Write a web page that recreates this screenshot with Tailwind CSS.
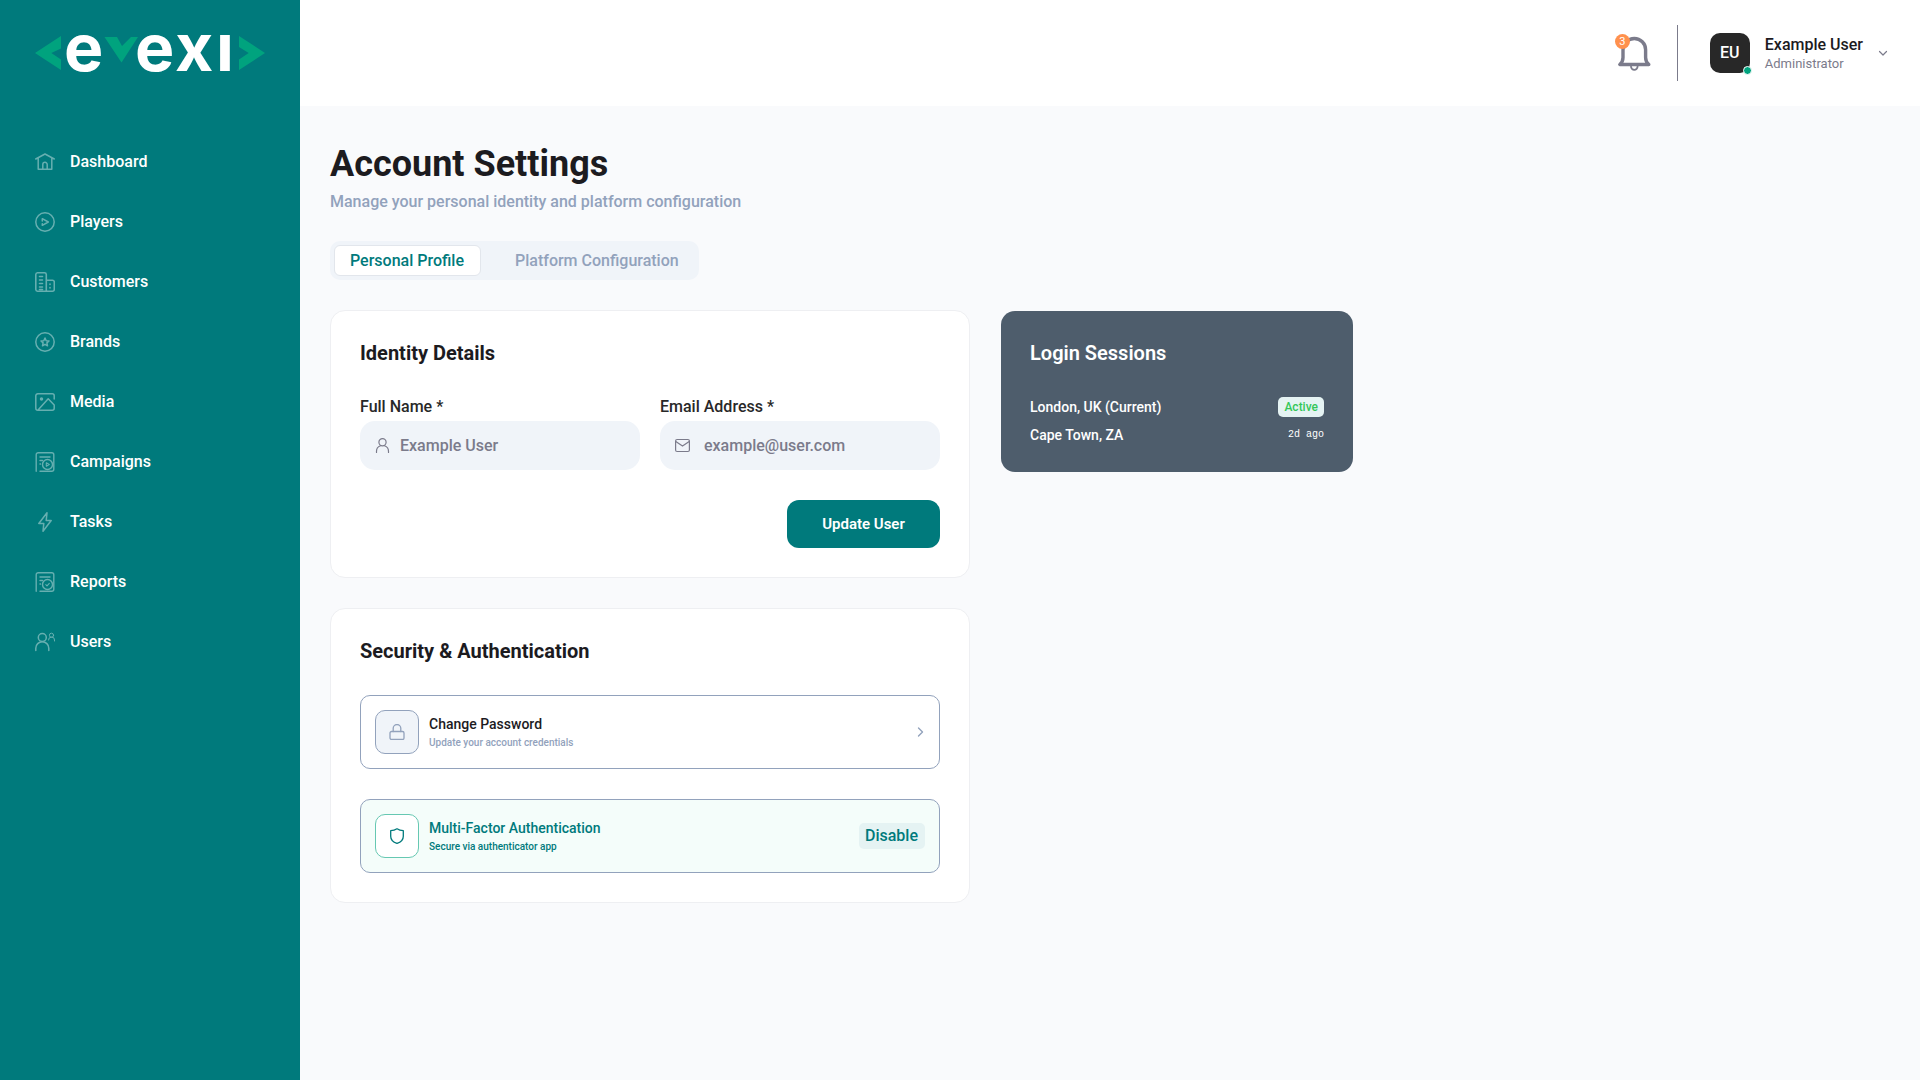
<!DOCTYPE html>
<html lang="en">
<head>
<meta charset="utf-8">
<meta name="viewport" content="width=device-width, initial-scale=1">
<title>Account Settings</title>
<script src="https://cdn.jsdelivr.net/npm/@tailwindcss/browser@4"></script>
</head>
<body class="flex min-h-screen bg-[#f9fafc] font-['Roboto',sans-serif] text-base font-medium text-[#1c1b1f]">

<aside class="w-[300px] shrink-0 bg-[#007a7c] px-[35px] text-white">
  <a href="#" aria-label="evexi" class="flex h-[106px] items-center">
    <svg class="w-[230px] shrink-0" height="106" viewBox="0 0 230 106" fill="none">
      <g fill="#00a37e">
        <path d="M26 36v12.500L16.300 53 26 59.500V70L0 53z"/>
        <path d="M69.500 37H82l5 9 9-9h7L86.500 62.500z"/>
        <path d="M204 36v11l9.700 6L204 59.500V70l26-17z"/>
      </g>
      <g fill="#fff" font-family="Inter" font-weight="700" font-size="66">
        <text x="29" y="71">e</text><text x="100" y="71">e</text><text x="140" y="71">x</text><text x="181" y="71">ı</text>
      </g>
    </svg>
  </a>
  <nav class="mt-[26px] flex flex-col">
    <a href="#" class="flex h-[60px] items-center gap-[15px]"><svg class="size-5 opacity-40" viewBox="0 0 20 20" fill="none" stroke="#fff" stroke-width="1.500" stroke-linecap="round" stroke-linejoin="round"><path d="M.7 7 10 2l9.300 5M3.200 6v11.300h13.600V6M7.800 17v-4.500a2.200 2.200 0 0 1 4.400 0V17"/></svg>Dashboard</a>
    <a href="#" class="flex h-[60px] items-center gap-[15px]"><svg class="size-5 opacity-40" viewBox="0 0 20 20" fill="none" stroke="#fff" stroke-width="1.500" stroke-linecap="round" stroke-linejoin="round"><circle cx="10" cy="10" r="9.200"/><path d="M7.300 9V6.700l6 3.300-6 3.300v-1.500"/></svg>Players</a>
    <a href="#" class="flex h-[60px] items-center gap-[15px]"><svg class="size-5 opacity-40" viewBox="0 0 20 20" fill="none" stroke="#fff" stroke-width="1.600" stroke-linecap="round" stroke-linejoin="round"><path d="M11.300 19.200H2.500A1.800 1.800 0 0 1 .8 17.500v-15A1.800 1.800 0 0 1 2.500.8h7a1.800 1.800 0 0 1 1.800 1.700zM11.300 8.300h6.200a1.800 1.800 0 0 1 1.800 1.700v7.500a1.800 1.800 0 0 1-1.800 1.700h-6.200M4.500 4.500h3M4.500 8h3M4.500 11.500h3M4.500 15h3M4.500 17.500h3M15 12v.5M15 15.500v.5"/></svg>Customers</a>
    <a href="#" class="flex h-[60px] items-center gap-[15px]"><svg class="size-5 opacity-40" viewBox="0 0 20 20" fill="none" stroke="#fff" stroke-width="1.500" stroke-linecap="round" stroke-linejoin="round"><circle cx="10" cy="10" r="9.200"/><path d="m10 6 1.200 2.700 2.800.3-2.100 1.900.6 2.900L10 12.300l-2.500 1.500.6-2.900L6 9l2.800-.3z"/></svg>Brands</a>
    <a href="#" class="flex h-[60px] items-center gap-[15px]"><svg class="size-5 opacity-40" viewBox="0 0 20 20" fill="none" stroke="#fff" stroke-width="1.500" stroke-linecap="round" stroke-linejoin="round"><path d="M19.200 7V3.800a2 2 0 0 0-2-2H2.800a2 2 0 0 0-2 2v12.400a2 2 0 0 0 2 2h14.400a2 2 0 0 0 2-2V13l-6-6.200L3.500 17.500"/><circle cx="6.500" cy="7" r="1" fill="#fff"/></svg>Media</a>
    <a href="#" class="flex h-[60px] items-center gap-[15px]"><svg class="size-5 opacity-40" viewBox="0 0 20 20" fill="none" stroke="#fff" stroke-width="1.400" stroke-linecap="round" stroke-linejoin="round"><path d="M1.200 19.300V2.700a2 2 0 0 1 2-2h13.600a2 2 0 0 1 2 2v14.600a2 2 0 0 1-2 2H5M5 5h10M5 8.500h2.500M5 12h.5"/><circle cx="12.500" cy="12.500" r="5"/><path d="m11.300 10.700 3 1.800-3 1.800z" stroke-width="1.100"/></svg>Campaigns</a>
    <a href="#" class="flex h-[60px] items-center gap-[15px]"><svg class="size-5 opacity-40" viewBox="0 0 20 20" fill="none" stroke="#fff" stroke-width="1.500" stroke-linecap="round" stroke-linejoin="round"><path d="M12 .8 3.800 11.500h5L8 19.200l8.200-10.700h-5z"/></svg>Tasks</a>
    <a href="#" class="flex h-[60px] items-center gap-[15px]"><svg class="size-5 opacity-40" viewBox="0 0 20 20" fill="none" stroke="#fff" stroke-width="1.400" stroke-linecap="round" stroke-linejoin="round"><path d="M1.200 19.300V2.700a2 2 0 0 1 2-2h13.600a2 2 0 0 1 2 2v14.600a2 2 0 0 1-2 2H5M5 5h10M5 8.500h2.500M5 12h.5"/><circle cx="12.500" cy="12.500" r="5"/><path d="m10.800 12.700 1.200 1.200 2.300-2.600" stroke-width="1.100"/></svg>Reports</a>
    <a href="#" class="flex h-[60px] items-center gap-[15px]"><svg class="size-5 opacity-40" viewBox="0 0 20 20" fill="none" stroke="#fff" stroke-width="1.500" stroke-linecap="round" stroke-linejoin="round"><circle cx="7.300" cy="5.500" r="4"/><path d="M.8 18.500v-2.300a6.500 6.500 0 0 1 13 0v2.300"/><g stroke-width="1"><circle cx="16.500" cy="3.300" r="2.100"/><path d="M13.500 8a3 3 0 0 1 6 0v1"/></g></svg>Users</a>
  </nav>
</aside>

<div class="min-w-0 grow">
  <header class="flex h-[106px] items-center justify-end bg-white pr-[29px]">
    <button type="button" aria-label="Notifications" class="relative mr-[26px] h-[38px] w-9">
      <svg class="absolute left-0 top-0 h-[38px] w-9" viewBox="0 0 36 38" fill="none" stroke="#7b7b8b" stroke-width="3.400" stroke-linejoin="round" stroke-linecap="round"><path d="M4.800 30.500h29c-2.700-2.300-3.200-4-3.200-7v-7.700a11.300 11.300 0 0 0-22.600 0v7.700c0 3-.5 4.700-3.200 7z"/><path d="M16 32.500a3.300 3.300 0 0 0 6.600 0" stroke-width="1.800"/></svg>
      <span class="absolute left-0 top-0 flex size-[15px] items-center justify-center rounded-full bg-[#ff914d] text-[11px] font-normal leading-none text-white">3</span>
    </button>
    <div class="h-14 w-px bg-[#7b7b8b]"></div>
    <button type="button" class="ml-8 flex items-center text-left">
      <span class="relative mr-[15px] flex size-10 items-center justify-center rounded-[10px] bg-[#282828] text-white">EU
        <span class="absolute -bottom-[2px] -right-[2px] size-[9px] rounded-full border border-white bg-[#00a37e]"></span>
      </span>
      <span class="flex flex-col pt-[2px]">
        <span class="leading-5">Example User</span>
        <span class="text-[13px] font-normal leading-[18px] text-[#7b7b8b]">Administrator</span>
      </span>
      <svg class="ml-3 size-4" viewBox="0 0 16 16" fill="none" stroke="#7b7b8b" stroke-width="1.200" stroke-linecap="round" stroke-linejoin="round"><path d="m4.500 6.500 3.500 3.500 3.500-3.500"/></svg>
    </button>
  </header>

  <main class="px-[30px] py-9">
    <h1 class="text-4xl font-bold leading-[44px]">Account Settings</h1>
    <p class="mt-1 leading-6 text-[#92a2bc]">Manage your personal identity and platform configuration</p>

    <div role="tablist" class="mt-[27px] flex h-[39px] w-fit items-center rounded-[10px] bg-[#f0f4f9] px-1">
      <button type="button" role="tab" aria-selected="true" class="h-[31px] rounded-md border border-[#e2e6ec] bg-white pl-[15px] pr-4 text-[#007a7c]">Personal Profile</button>
      <button type="button" role="tab" aria-selected="false" class="ml-[18px] h-[31px] px-4 text-[#92a2bc]">Platform Configuration</button>
    </div>

    <div class="mt-[30px] grid max-w-[1024px] grid-cols-[320fr_177fr] items-start gap-[30px]">
      <div class="flex flex-col gap-[30px]">
        <section class="rounded-[15px] border border-[#eeeff2] bg-white p-[29px]">
          <h2 class="text-xl font-bold leading-[27px]">Identity Details</h2>
          <form class="mt-[30px]">
            <div class="grid grid-cols-2 gap-5">
              <div>
                <label for="name" class="mb-1 block leading-5 text-[#282828]">Full Name *</label>
                <div class="flex h-[49px] items-center rounded-[15px] bg-[#f0f4f9] px-[15px] text-[#7b7b8b]">
                  <svg class="mr-[10px] size-[15px] shrink-0" viewBox="0 0 15 15" fill="none" stroke="currentColor" stroke-width="1.200" stroke-linecap="round"><circle cx="7.500" cy="4.200" r="3.600"/><path d="M1.500 14.400v-1.200c0-2.800 1.800-4.600 4-5.400M13.500 14.400v-1.200c0-2.800-1.800-4.600-4-5.400"/></svg>
                  <input id="name" type="text" value="Example User" class="w-full min-w-0 bg-transparent outline-none">
                </div>
              </div>
              <div>
                <label for="email" class="mb-1 block leading-5 text-[#282828]">Email Address *</label>
                <div class="flex h-[49px] items-center rounded-[15px] bg-[#f0f4f9] px-[15px] text-[#7b7b8b]">
                  <svg class="mr-[14px] size-[15px] shrink-0" viewBox="0 0 15 15" fill="none" stroke="currentColor" stroke-width="1.200" stroke-linecap="round" stroke-linejoin="round"><rect x=".6" y="1.500" width="13.800" height="12" rx="1.500"/><path d="m.8 3.500 6.700 4.600 6.700-4.600"/></svg>
                  <input id="email" type="email" value="example@user.com" class="w-full min-w-0 bg-transparent outline-none">
                </div>
              </div>
            </div>
            <button type="button" class="ml-auto mt-[30px] block h-12 w-[153px] rounded-xl bg-[#007a7c] text-[15px] font-semibold text-white">Update User</button>
          </form>
        </section>

        <section class="rounded-[15px] border border-[#eeeff2] bg-white p-[29px]">
          <h2 class="text-xl font-bold leading-[27px]">Security &amp; Authentication</h2>
          <div class="mt-[30px] flex flex-col gap-[30px]">
            <button type="button" class="flex h-[74px] items-center rounded-[10px] border border-[#92a2bc] px-[14px] text-left">
              <span class="mr-[10px] flex size-11 items-center justify-center rounded-[10px] border border-[#92a2bc] bg-[#f0f4f9]">
                <svg class="size-4" viewBox="0 0 16 16" fill="none" stroke="#92a2bc" stroke-width="1.300" stroke-linecap="round" stroke-linejoin="round"><rect x="1" y="7.500" width="14" height="8" rx="1.500"/><path d="M4.200 7.500V4.300a3.800 3.800 0 0 1 7.600 0v3.200"/></svg>
              </span>
              <span class="flex flex-col">
                <span class="text-sm leading-5">Change Password</span>
                <span class="text-[10px] leading-[17px] text-[#92a2bc]">Update your account credentials</span>
              </span>
              <svg class="ml-auto size-3" viewBox="0 0 12 12" fill="none" stroke="#92a2bc" stroke-width="1.400" stroke-linecap="round" stroke-linejoin="round"><path d="m5.500 2 4 4-4 4"/></svg>
            </button>
            <div class="flex h-[74px] items-center rounded-[10px] border border-[#92a2bc] bg-[#f4fdfa] px-[14px] text-[#007a7c]">
              <span class="mr-[10px] flex size-11 items-center justify-center rounded-[10px] border border-[#66c8b2] bg-white">
                <svg class="size-4" viewBox="0 0 16 16" fill="none" stroke="#007a7c" stroke-width="1.300" stroke-linejoin="round"><path d="M8 .8c1.800 1.300 4 1.900 6.300 1.900v5.500c0 3.500-2.500 6-6.300 7.200-3.800-1.200-6.300-3.700-6.300-7.200V2.700C4 2.700 6.200 2.100 8 .8z"/></svg>
              </span>
              <span class="flex flex-col">
                <span class="text-sm leading-5">Multi-Factor Authentication</span>
                <span class="text-[10px] leading-[17px]">Secure via authenticator app</span>
              </span>
              <button type="button" class="ml-auto h-[26px] rounded-[5px] bg-[#e5f3f3] pl-[6px] pr-[7px]">Disable</button>
            </div>
          </div>
        </section>
      </div>

      <section class="rounded-[15px] border border-transparent bg-[#4e5d6c] bg-clip-padding p-[29px] text-white">
        <h2 class="text-xl font-semibold leading-[27px]">Login Sessions</h2>
        <ul class="mt-[30px] flex flex-col gap-[10px] text-sm">
          <li class="flex h-5 items-center justify-between">London, UK (Current)<span class="rounded-[5px] bg-[#e5f3f3] px-[6px] text-xs leading-5 text-[#34c759]">Active</span></li>
          <li class="flex h-4 items-center justify-between">Cape Town, ZA<span class="font-['Liberation_Mono',monospace] text-[10px] font-normal leading-4">2d ago</span></li>
        </ul>
      </section>
    </div>
  </main>
</div>
</body>
</html>
